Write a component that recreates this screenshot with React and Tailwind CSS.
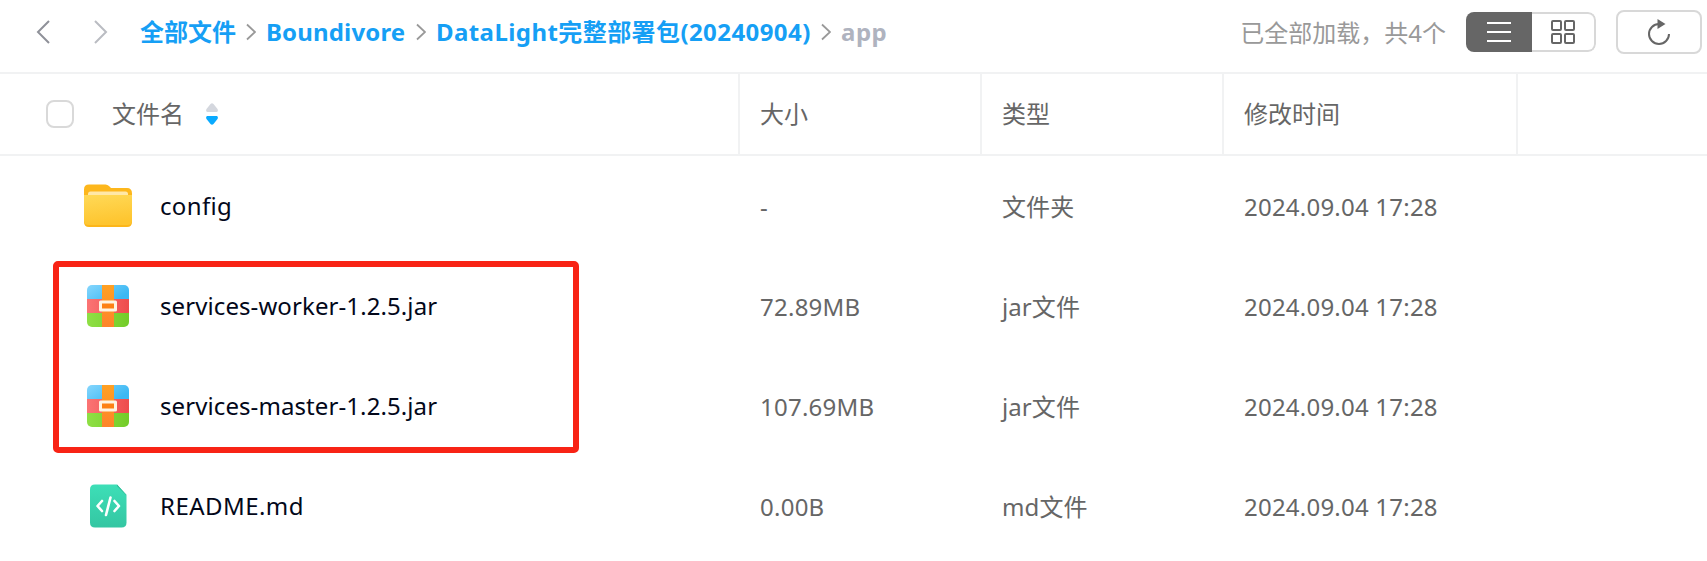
const FONT = "font-['Noto_Sans','Noto_Sans_CJK_SC',sans-serif]";

function FolderIcon() {
  return (
    <svg width="48" height="44" viewBox="0 0 48 44">
      <defs>
        <linearGradient id="folderFront" x1="0" y1="0" x2="0.2" y2="1">
          <stop offset="0" stopColor="#ffd957" />
          <stop offset="1" stopColor="#fec52f" />
        </linearGradient>
      </defs>
      <path d="M0 12V5.500Q0 .5 5 .5H21.500Q23.500 .5 25 2L27 4H43Q48 4 48 9.500V12Z" fill="#fdb71c" />
      <path d="M4 12V10Q4 7.500 6.500 7.500H41.500Q44 7.500 44 10V12Z" fill="#ffe8a8" />
      <path d="M0 11H48V38Q48 43 43 43H5Q0 43 0 38Z" fill="#fcb61a" />
      <path d="M0 11H48V36.500Q48 41 43 41H5Q0 41 0 36.500Z" fill="url(#folderFront)" />
    </svg>
  );
}

function ArchiveIcon() {
  return (
    <svg width="42" height="42" viewBox="0 0 42 42">
      <defs>
        <linearGradient id="jarBlue" x1="0" y1="0" x2="1" y2="0.5">
          <stop offset="0" stopColor="#86d6fd" />
          <stop offset="1" stopColor="#3bb8f3" />
        </linearGradient>
        <linearGradient id="jarRed" x1="0" y1="0" x2="1" y2="0">
          <stop offset="0" stopColor="#fb7474" />
          <stop offset="1" stopColor="#ee4c4c" />
        </linearGradient>
        <linearGradient id="jarGreen" x1="0" y1="0" x2="1" y2="0">
          <stop offset="0" stopColor="#8fdf45" />
          <stop offset="1" stopColor="#73cc28" />
        </linearGradient>
        <linearGradient id="jarStrap" x1="0" y1="0" x2="0" y2="1">
          <stop offset="0" stopColor="#ffa023" />
          <stop offset="1" stopColor="#fd8429" />
        </linearGradient>
        <clipPath id="jarClip">
          <rect width="42" height="42" rx="5" />
        </clipPath>
      </defs>
      <g clipPath="url(#jarClip)">
        <rect width="42" height="14" fill="url(#jarBlue)" />
        <rect y="14" width="42" height="14" fill="url(#jarRed)" />
        <rect y="28" width="42" height="14" fill="url(#jarGreen)" />
        <rect x="15" width="12" height="42" fill="url(#jarStrap)" />
      </g>
      <rect x="12" y="15.500" width="18" height="11" rx="1.500" fill="#fff4e2" />
      <rect x="15" y="18.500" width="12" height="5" fill="#fd8114" />
    </svg>
  );
}

function CodeIcon() {
  return (
    <svg width="37" height="44" viewBox="0 0 37 44">
      <defs>
        <linearGradient id="codeBg" x1="0" y1="0" x2="0" y2="1">
          <stop offset="0" stopColor="#3ddfb7" />
          <stop offset="1" stopColor="#34c6a2" />
        </linearGradient>
      </defs>
      <path d="M5 0.500H27L36.500 11V38.500Q36.500 43.500 31.500 43.500H5Q0 43.500 0 38.500V5.500Q0 .5 5 .5Z" fill="url(#codeBg)" />
      <path d="M27 .5L36.500 11H36L27 2Z" fill="#2db592" />
      <g fill="none" stroke="#fff" strokeWidth="2.600" strokeLinecap="round" strokeLinejoin="round">
        <path d="M12 17L7.500 22L12 27" />
        <path d="M24.500 17L29 22L24.500 27" />
        <path d="M20.500 13.500L16 31" />
      </g>
    </svg>
  );
}

function Chevron() {
  return (
    <svg width="10" height="18" viewBox="0 0 10 18" className="shrink-0">
      <path d="M1 1.500L9 9L1 16.500" fill="none" stroke="#999" strokeWidth="1.800" />
    </svg>
  );
}

const rows = [
  { name: "config", nameClass: "tracking-[0.35px]", size: "-", type: "文件夹", icon: <FolderIcon /> },
  { name: "services-worker-1.2.5.jar", nameClass: "tracking-[0.09px]", size: "72.89MB", type: "jar文件", icon: <ArchiveIcon /> },
  { name: "services-master-1.2.5.jar", nameClass: "tracking-[0.09px]", size: "107.69MB", type: "jar文件", icon: <ArchiveIcon /> },
  { name: "README.md", nameClass: "tracking-[0.45px]", size: "0.00B", type: "md文件", icon: <CodeIcon /> },
];

function Toolbar() {
  return (
    <header className="flex h-[74px] shrink-0 items-start border-b-2 border-[#f1f2f3]">
      <nav className="flex h-16 items-center pl-9 text-2xl font-bold whitespace-nowrap text-[#169ff5]">
        <svg width="14" height="24" viewBox="0 0 14 24" className="shrink-0">
          <path d="M13 1L2 12L13 23" fill="none" stroke="#8f9199" strokeWidth="2" />
        </svg>
        <svg width="14" height="24" viewBox="0 0 14 24" className="ml-11 shrink-0">
          <path d="M1 1L12 12L1 23" fill="none" stroke="#babcc2" strokeWidth="2" />
        </svg>
        <div className="ml-8 w-[106px]">全部文件</div>
        <Chevron />
        <div className="ml-2.5 w-[150px] tracking-[0.15px]">Boundivore</div>
        <Chevron />
        <div className="ml-2.5 w-[385px] tracking-[0.42px]">DataLight完整部署包(20240904)</div>
        <Chevron />
        <div className="ml-2.5 tracking-[0.5px] text-[#afb3bf]">app</div>
      </nav>
      <div className="ml-auto flex h-16 items-center pr-[5px]">
        <span className="mr-5 pt-0.5 text-2xl whitespace-nowrap text-[#999]">已全部加载，共4个</span>
        <div className="flex h-10 w-[130px] overflow-hidden rounded-lg">
          <button className="flex w-[66px] items-center justify-center bg-[#666]">
            <svg width="24" height="20" viewBox="0 0 24 20">
              <path d="M0 1H24M0 10H24M0 19H24" stroke="#fff" strokeWidth="2" />
            </svg>
          </button>
          <button className="flex flex-1 items-center justify-center rounded-r-lg border-2 border-l-0 border-[#d8d8d8]">
            <svg width="24" height="24" viewBox="0 0 24 24" fill="none" stroke="#666" strokeWidth="2">
              <rect x="1" y="1" width="9" height="9" rx="1" />
              <rect x="14" y="1" width="9" height="9" rx="1" />
              <rect x="1" y="14" width="9" height="9" rx="1" />
              <rect x="14" y="14" width="9" height="9" rx="1" />
            </svg>
          </button>
        </div>
        <button className="ml-5 flex h-11 w-[86px] items-center justify-center rounded-lg border-2 border-[#d8d8d8]">
          <svg width="24" height="28" viewBox="0 0 24 28">
            <path d="M12 6A10 10 0 1 0 22 16" fill="none" stroke="#666" strokeWidth="2" />
            <path d="M10.500 1L18.500 6L10.500 11Z" fill="#666" />
          </svg>
        </button>
      </div>
    </header>
  );
}

function TableHead() {
  return (
    <div className="flex h-[82px] shrink-0 border-b-2 border-[#f1f2f3] text-2xl text-[#666]">
      <div className="flex w-[740px] items-center border-r-2 border-[#f1f2f3] pl-[46px]">
        <span className="size-7 rounded-lg border-2 border-[#d9d9d9]" />
        <span className="ml-[38px]">文件名</span>
        <svg width="12" height="22" viewBox="0 0 12 22" className="ml-[22px]">
          <path d="M1 9Q-.5 8 .5 6L4.500 1Q6 -.5 7.500 1L11.500 6Q12.500 8 11 9Z" fill="#d4d7de" />
          <path d="M1 13Q-.5 14 .5 16L4.500 21Q6 22.500 7.500 21L11.500 16Q12.500 14 11 13Z" fill="#09aaff" />
        </svg>
      </div>
      <div className="flex w-[242px] items-center border-r-2 border-[#f1f2f3] pl-5">大小</div>
      <div className="flex w-[242px] items-center border-r-2 border-[#f1f2f3] pl-5">类型</div>
      <div className="flex w-[294px] items-center border-r-2 border-[#f1f2f3] pl-5">修改时间</div>
    </div>
  );
}

export default function App() {
  return (
    <main className={`relative flex h-[561px] w-[1707px] flex-col overflow-hidden bg-white ${FONT}`}>
      <Toolbar />
      <TableHead />
      {rows.map((row) => (
        <div key={row.name} className="flex h-[100px] shrink-0 items-center text-2xl text-[#666]">
          <div className="flex w-[740px] items-center pl-[84px]">
            <div className="flex w-12 justify-center">{row.icon}</div>
            <span className={`ml-7 text-[#03081a] ${row.nameClass}`}>{row.name}</span>
          </div>
          <div className="w-[242px] pt-0.5 pl-5 tracking-[0.25px]">{row.size}</div>
          <div className="w-[242px] pt-0.5 pl-5 tracking-[0.1px]">{row.type}</div>
          <div className="pt-0.5 pl-5 tracking-[0.22px]">2024.09.04 17:28</div>
        </div>
      ))}
      <div className="pointer-events-none absolute top-[261px] left-[53px] h-48 w-[526px] rounded-[5px] border-6 border-[#f82315]" />
    </main>
  );
}
